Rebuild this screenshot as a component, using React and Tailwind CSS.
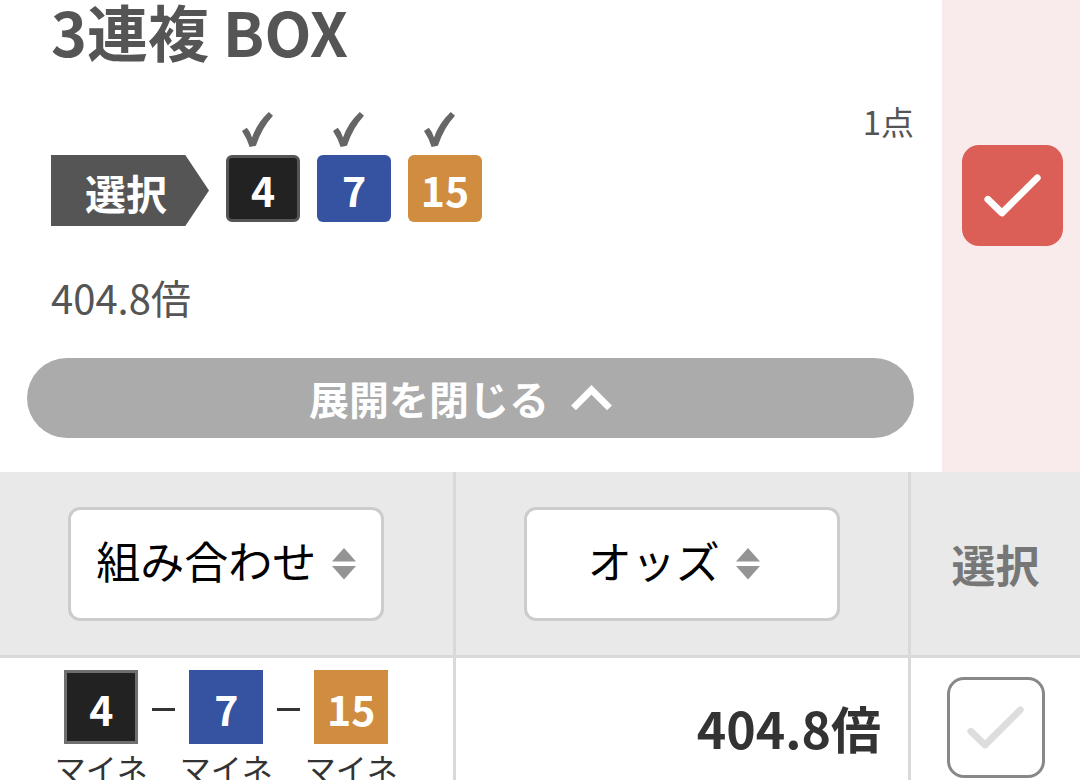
import { useState } from "react";

const horses = [
  { number: 4, name: "マイネ", color: "bg-[#222222]", border: "border-[3px] border-[#555555]", cellBorder: "border-[3px] border-[#6f6f6f]" },
  { number: 7, name: "マイネ", color: "bg-[#3653a1]", border: "", cellBorder: "" },
  { number: 15, name: "マイネ", color: "bg-[#d08d3f]", border: "", cellBorder: "" },
];

const PickMark = () => (
  <svg viewBox="0 0 31 35" className="ml-4 h-[35px] w-[31px] self-start" fill="#666666" aria-hidden="true">
    <path d="M0 18.9 L4.8 15.8 Q8.3 19.5 10 25.6 Q15 11 26.8 0 L31 3.8 Q20 15.5 13.9 33.8 L7.6 34.9 Q4.8 26 0 18.9 Z" />
  </svg>
);

const SortArrows = () => (
  <svg viewBox="0 0 24 32" className="h-8 w-6" fill="#949494" aria-hidden="true">
    <path d="M12 0 L24 13.5 H0 Z" />
    <path d="M0 18 H24 L12 31.5 Z" />
  </svg>
);

const CheckBox = ({ label, checked, onChange, className }) => (
  <label className={`grid shrink-0 rounded-[17px] ${className}`}>
    <input
      type="checkbox"
      aria-label={label}
      checked={checked}
      onChange={onChange}
      className="col-start-1 row-start-1 h-full w-full cursor-pointer appearance-none"
    />
    <svg
      viewBox="0 0 101 101"
      className="pointer-events-none col-start-1 row-start-1 h-[101px] w-[101px] place-self-center"
      fill="none"
      stroke="currentColor"
      strokeWidth="6.8"
      strokeLinecap="round"
      strokeLinejoin="round"
      aria-hidden="true"
    >
      <path d="M25.8 54.3 L40 68 L75.3 32.8" />
    </svg>
  </label>
);

const SortButton = ({ children, className = "" }) => (
  <button
    type="button"
    className={`mx-auto flex h-[114px] w-[316px] items-center justify-center gap-4 rounded-xl border-[3px] border-[#cccccc] bg-white text-[44px] leading-[64px] font-normal text-black ${className}`}
  >
    <span className="pb-2">{children}</span>
    <SortArrows />
  </button>
);

const App = () => {
  const [betSelected, setBetSelected] = useState(true);
  const [rowSelected, setRowSelected] = useState(false);

  return (
    <div className="h-screen overflow-hidden bg-white font-['Noto_Sans_CJK_JP',sans-serif] text-[#555555]">
      <section className="flex">
        <div className="flex-1 pr-7 pb-[34px] pl-[27px]">
          <div className="pl-6">
            <h1 className="text-[61px] leading-[62px] font-bold">3連複 BOX</h1>

            <div className="mt-[42px] flex items-start justify-between">
              <div className="flex items-start gap-[17px]">
                <div className="mt-[51px] flex h-[71px] w-[158px] items-center bg-[#555555] pt-1 pl-[34px] text-[41px] font-bold text-white [clip-path:polygon(0_0,85%_0,100%_50%,85%_100%,0_100%)]">
                  選択
                </div>
                {horses.map((horse) => (
                  <div key={horse.number} className="flex flex-col items-center gap-2 pt-2">
                    <PickMark />
                    <span
                      className={`flex h-[67px] w-[74px] items-center justify-center rounded-md pt-0.5 text-[41px] leading-none font-bold text-white ${horse.color} ${horse.border}`}
                    >
                      {horse.number}
                    </span>
                  </div>
                ))}
              </div>
              <p className="text-[33px] leading-[34px]">1点</p>
            </div>

            <p className="mt-[47px] text-[40px] leading-[48px]">404.8倍</p>
          </div>

          <button
            type="button"
            className="mt-[37px] flex h-20 w-full items-center justify-center gap-[22px] rounded-full bg-[#ababab] pr-5 text-[40px] font-bold text-white"
          >
            展開を閉じる
            <svg viewBox="0 0 41 26" className="h-[26px] w-[41px]" fill="none" stroke="currentColor" strokeWidth="6.8" aria-hidden="true">
              <path d="M2.5 22.8 L20.5 4.8 L38.5 22.8" />
            </svg>
          </button>
        </div>

        <div className="w-[138px] bg-[#f9eaeb] pt-[145px] pl-5">
          <CheckBox
            label="3連複 BOX を選択"
            checked={betSelected}
            onChange={(e) => setBetSelected(e.target.checked)}
            className="h-[101px] w-[101px] bg-[#dc5f57] text-white"
          />
        </div>
      </section>

      <table className="w-full table-fixed border-separate border-spacing-0">
        <thead className="bg-[#e9e9e9]">
          <tr className="h-[186px]">
            <th className="border-r-[3px] border-b-[3px] border-[#d9d9d9] p-0">
              <SortButton>組み合わせ</SortButton>
            </th>
            <th className="border-r-[3px] border-b-[3px] border-[#d9d9d9] p-0">
              <SortButton className="pr-4">オッズ</SortButton>
            </th>
            <th className="w-[169px] border-b-[3px] border-[#d9d9d9] p-0 text-[44px] font-bold text-[#777777]">
              選択
            </th>
          </tr>
        </thead>
        <tbody className="text-[#333333]">
          <tr>
            <td className="border-r-[3px] border-[#d9d9d9] px-0 pt-3 pb-2">
              <div className="flex items-start justify-center">
                {horses.map((horse, index) => (
                  <div key={horse.number} className="flex items-start">
                    {index > 0 && (
                      <span className="-mx-1 flex h-[74px] w-10 items-center justify-center pt-1">
                        <span className="h-[3px] w-[23px] bg-[#333333]" />
                      </span>
                    )}
                    <div className="flex w-[93px] flex-col items-center gap-1">
                      <span
                        className={`flex h-[74px] w-[74px] items-center justify-center pt-0.5 text-[41px] leading-none font-bold text-white ${horse.color} ${horse.cellBorder}`}
                      >
                        {horse.number}
                      </span>
                      <span className="text-[31px] leading-10">{horse.name}</span>
                    </div>
                  </div>
                ))}
              </div>
            </td>
            <td className="border-r-[3px] border-[#d9d9d9] py-0 pr-[27px] pl-0 text-right text-[50px] font-bold">
              404.8倍
            </td>
            <td className="p-0">
              <CheckBox
                label="4-7-15 を選択"
                checked={rowSelected}
                onChange={(e) => setRowSelected(e.target.checked)}
                className="mx-auto h-[101px] w-[98px] place-content-center border-[3px] border-[#888888] text-[#dddddd]"
              />
            </td>
          </tr>
        </tbody>
      </table>
    </div>
  );
};

export default App;
